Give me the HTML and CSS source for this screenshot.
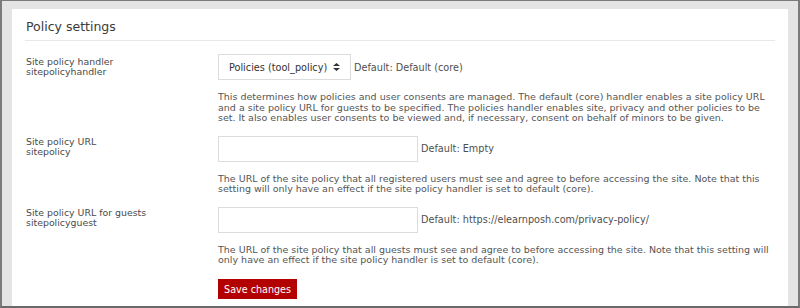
FILE: index.html
```html
<!DOCTYPE html>
<html>
<head>
<meta charset="utf-8">
<link rel="stylesheet" href="styles.css">
</head>
<body>
<div class="frame">
  <div class="card">
    <h2 class="title">Policy settings</h2>
    <div class="setting row1">
      <div class="label">Site policy handler<br>sitepolicyhandler</div>
      <div class="field">
        <div class="control">
          <div class="select">Policies (tool_policy)
            <svg class="arrows" width="7" height="8" viewBox="0 0 7 8"><path d="M3.5 0 L7 3 L0 3 Z M0 5 L7 5 L3.5 8 Z" fill="#333"/></svg>
          </div>
          <span class="default">Default: Default (core)</span>
        </div>
        <p class="desc">This determines how policies and user consents are managed. The default (core) handler enables a site policy URL and a site policy URL for guests to be specified. The policies handler enables site, privacy and other policies to be set. It also enables user consents to be viewed and, if necessary, consent on behalf of minors to be given.</p>
      </div>
    </div>
    <div class="setting row2">
      <div class="label">Site policy URL<br>sitepolicy</div>
      <div class="field">
        <div class="control">
          <div class="input"></div>
          <span class="default">Default: Empty</span>
        </div>
        <p class="desc">The URL of the site policy that all registered users must see and agree to before accessing the site. Note that this setting will only have an effect if the site policy handler is set to default (core).</p>
      </div>
    </div>
    <div class="setting row3">
      <div class="label">Site policy URL for guests<br>sitepolicyguest</div>
      <div class="field">
        <div class="control">
          <div class="input"></div>
          <span class="default">Default: https://elearnposh.com/privacy-policy/</span>
        </div>
        <p class="desc">The URL of the site policy that all guests must see and agree to before accessing the site. Note that this setting will only have an effect if the site policy handler is set to default (core).</p>
      </div>
    </div>
    <div class="actions">
      <button class="save">Save changes</button>
    </div>
  </div>
</div>
</body>
</html>
```
FILE: styles.css
```css
html, body {
  margin: 0;
  padding: 0;
  background: #ffffff;
}
.frame {
  width: 800px;
  height: 308px;
  box-sizing: border-box;
  border-top: 1px solid #7a7a7a;
  border-left: 2px solid #7a7a7a;
  border-right: 2px solid #7a7a7a;
  border-bottom: 2px solid #6a6a6a;
  background: #e4e4e4;
  padding: 8px 10px 0 10px;
  font-family: "DejaVu Sans", Verdana, sans-serif;
  color: #555;
}
.card {
  background: #ffffff;
  height: 100%;
  box-sizing: border-box;
  padding: 0 13px 0 14px;
}
.title {
  margin: 0 0 0 -1px;
  padding: 10px 0 0 1px;
  height: 21px;
  font-size: 12.5px;
  font-weight: normal;
  line-height: 16px;
  color: #3a3a3a;
  border-bottom: 1px solid #e8e8e8;
}
.setting {
  display: grid;
  grid-template-columns: 192px 1fr;
}
.row1 { margin-top: 13px; }
.row2 { margin-top: 12px; }
.row3 { margin-top: 12px; }
.label {
  font-size: 9.4px;
  line-height: 10px;
  color: #4a4a4a;
  padding-top: 3px;
}
.row2 .label, .row3 .label { padding-top: 1px; }
.control {
  display: flex;
  align-items: center;
  gap: 3px;
  font-size: 9.7px;
}
.select {
  height: 26px;
  width: 133px;
  box-sizing: border-box;
  border: 1px solid #dcdcdc;
  display: flex;
  align-items: center;
  padding-left: 10px;
  gap: 6px;
  font-size: 9.7px;
  color: #333;
}
.input {
  height: 26px;
  width: 200px;
  box-sizing: border-box;
  border: 1px solid #dcdcdc;
}
.default {
  color: #4f4f4f;
}
.desc {
  margin: 12px 0 0 0;
  font-size: 9.5px;
  line-height: 10.5px;
  color: #555;
}
.actions {
  padding-left: 192px;
  margin-top: 12px;
}
.save {
  background: #b30000;
  color: #fff;
  border: none;
  font-family: "DejaVu Sans", Verdana, sans-serif;
  font-size: 9.6px;
  height: 20px;
  width: 79px;
  padding: 0;
}
```
